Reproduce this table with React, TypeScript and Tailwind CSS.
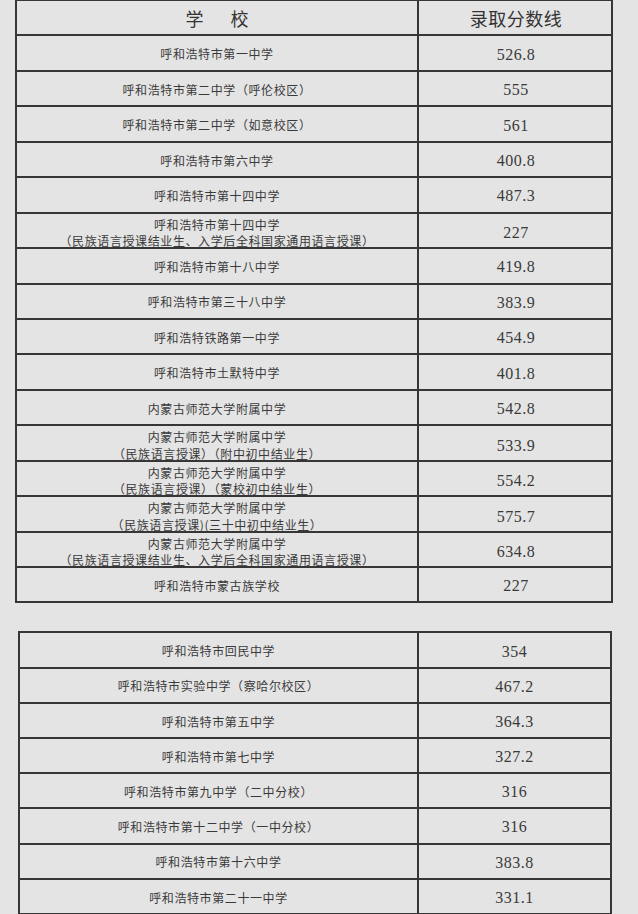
import React from "react";

type Row = { name: string[]; score: string };

const t1: Row[] = [
  { name: ["呼和浩特市第一中学"], score: "526.8" },
  { name: ["呼和浩特市第二中学（呼伦校区）"], score: "555" },
  { name: ["呼和浩特市第二中学（如意校区）"], score: "561" },
  { name: ["呼和浩特市第六中学"], score: "400.8" },
  { name: ["呼和浩特市第十四中学"], score: "487.3" },
  { name: ["呼和浩特市第十四中学", "（民族语言授课结业生、入学后全科国家通用语言授课）"], score: "227" },
  { name: ["呼和浩特市第十八中学"], score: "419.8" },
  { name: ["呼和浩特市第三十八中学"], score: "383.9" },
  { name: ["呼和浩特铁路第一中学"], score: "454.9" },
  { name: ["呼和浩特市土默特中学"], score: "401.8" },
  { name: ["内蒙古师范大学附属中学"], score: "542.8" },
  { name: ["内蒙古师范大学附属中学", "（民族语言授课）（附中初中结业生）"], score: "533.9" },
  { name: ["内蒙古师范大学附属中学", "（民族语言授课）（蒙校初中结业生）"], score: "554.2" },
  { name: ["内蒙古师范大学附属中学", "（民族语言授课)(三十中初中结业生）"], score: "575.7" },
  { name: ["内蒙古师范大学附属中学", "（民族语言授课结业生、入学后全科国家通用语言授课）"], score: "634.8" },
  { name: ["呼和浩特市蒙古族学校"], score: "227" },
];

const t2: Row[] = [
  { name: ["呼和浩特市回民中学"], score: "354" },
  { name: ["呼和浩特市实验中学（察哈尔校区）"], score: "467.2" },
  { name: ["呼和浩特市第五中学"], score: "364.3" },
  { name: ["呼和浩特市第七中学"], score: "327.2" },
  { name: ["呼和浩特市第九中学（二中分校）"], score: "316" },
  { name: ["呼和浩特市第十二中学（一中分校）"], score: "316" },
  { name: ["呼和浩特市第十六中学"], score: "383.8" },
  { name: ["呼和浩特市第二十一中学"], score: "331.1" },
];

const cjk = { fontFamily: '"Noto Sans CJK SC", "Noto Sans", sans-serif' };
const num = { fontFamily: '"Liberation Serif", "DejaVu Serif", serif' };

function DataRow({ r, h, cols }: { r: Row; h: string; cols: string }) {
  return (
    <div className={`grid ${cols} ${h} border-b-2 border-[#363636] box-border`}>
      <div
        className="flex flex-col items-center justify-center pt-[3px] border-r-2 border-[#363636] text-[12px] leading-[16.5px] tracking-[0.6px] text-[#3a3a3a]"
        style={cjk}
      >
        {r.name.map((n, i) => (
          <span key={i} className="whitespace-nowrap">{n}</span>
        ))}
      </div>
      <div className="flex items-center justify-center pt-[3px] text-[16px] text-[#3a3a3a] tracking-[0.5px]" style={num}>
        {r.score}
      </div>
    </div>
  );
}

export default function App() {
  return (
    <div className="w-[638px] h-[914px] overflow-hidden bg-[#e4e4e4]">
      <div className="ml-[15px] mt-[-1px] w-[598px] border-l-2 border-r-2 border-t-2 border-[#363636]">
        <div className="grid grid-cols-[402px_194px] h-[35.44px] border-b-2 border-[#363636] box-border">
          <div className="flex items-center justify-center pt-[2px] gap-[27px] border-r-2 border-[#363636] text-[18px] text-[#333]" style={cjk}>
            <span>学</span>
            <span>校</span>
          </div>
          <div className="flex items-center justify-center pt-[2px] text-[18px] text-[#333] tracking-[0.5px]" style={cjk}>
            录取分数线
          </div>
        </div>
        {t1.map((r, i) => (
          <DataRow key={i} r={r} h="h-[35.44px]" cols="grid-cols-[402px_194px]" />
        ))}
      </div>
      <div className="ml-[18px] mt-[28px] w-[594px] border-l-2 border-r-2 border-t-2 border-[#363636]">
        {t2.map((r, i) => (
          <DataRow key={i} r={r} h="h-[35.2px]" cols="grid-cols-[399px_191px]" />
        ))}
      </div>
    </div>
  );
}
